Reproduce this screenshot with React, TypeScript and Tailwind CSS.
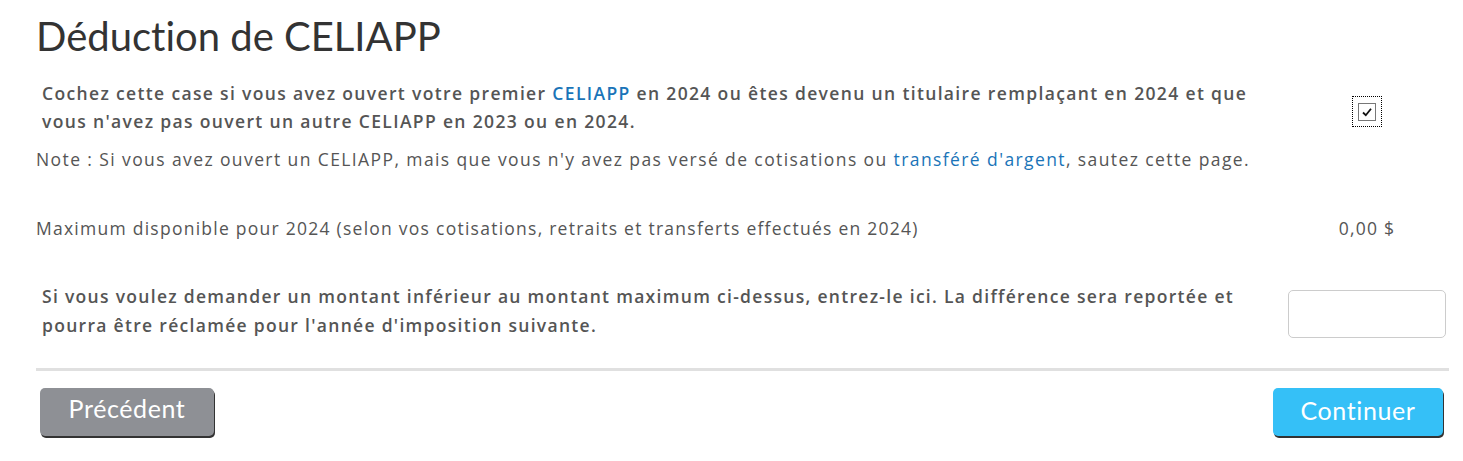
import React from 'react';

const body = { fontFamily: '"Open Sans", "Liberation Sans", sans-serif' };
const title = { fontFamily: 'Lato, "Open Sans", sans-serif' };

const App: React.FC = () => {
  return (
    <div className="w-[1463px] h-[461px] bg-white text-[#555] pl-[36px] pr-[14px]" style={body}>
      <h1 className="pt-[14px] text-[40px] leading-[44px] text-[#333] font-normal [font-variant-ligatures:none]" style={title}>
        Déduction de CELIAPP
      </h1>

      <div className="mt-[21px] grid grid-cols-[1fr_158px] gap-x-[3px] pr-[3px]">
        <p className="pl-[6px] text-[17.5px] leading-[28px] font-semibold tracking-[1.35px]">
          Cochez cette case si vous avez ouvert votre premier{' '}
          <a className="text-[#1a74b8]">CELIAPP</a> en 2024 ou êtes devenu un titulaire remplaçant en 2024 et que
          vous n'avez pas ouvert un autre CELIAPP en 2023 ou en 2024.
        </p>
        <div className="flex justify-center pt-[17px]">
          <div className="w-[30px] h-[31px] border border-dotted border-black flex items-center justify-center">
            <div className="w-[18px] h-[18px] border border-[#777] bg-white flex items-center justify-center">
              <svg width="12" height="12" viewBox="0 0 12 12">
                <path d="M2 6.5 L4.8 9.2 L10 2.8" fill="none" stroke="#111" strokeWidth="1.8" />
              </svg>
            </div>
          </div>
        </div>
      </div>

      <p className="mt-[12px] text-[17.5px] leading-[24px] tracking-[1.4px]">
        Note : Si vous avez ouvert un CELIAPP, mais que vous n'y avez pas versé de cotisations ou{' '}
        <a className="text-[#1a74b8]">transféré d'argent</a>, sautez cette page.
      </p>

      <div className="mt-[45px] grid grid-cols-[1fr_158px] gap-x-[3px] pr-[3px] text-[17.5px] leading-[24px] tracking-[1.25px]">
        <p>Maximum disponible pour 2024 (selon vos cotisations, retraits et transferts effectués en 2024)</p>
        <p className="text-center">0,00 $</p>
      </div>

      <div className="mt-[42px] grid grid-cols-[1fr_158px] gap-x-[3px] pr-[3px] items-start">
        <p className="pl-[6px] pr-[20px] text-[17.5px] leading-[29px] font-semibold tracking-[1.3px]">
          Si vous voulez demander un montant inférieur au montant maximum ci-dessus, entrez-le ici. La différence sera reportée et
          pourra être réclamée pour l'année d'imposition suivante.
        </p>
        <input
          type="text"
          className="mt-[8px] h-[48px] w-[158px] rounded-[5px] border border-[#ccc] bg-white px-2 outline-none"
        />
      </div>

      <div className="mt-[28px] h-[3px] bg-[#e0e0e0]" />

      <div className="mt-[17px] flex justify-between pl-[4px] pr-[6px]" style={title}>
        <button className="w-[174px] h-[48px] rounded-[5px] bg-[#8e9095] text-white text-[25px] tracking-[0.6px] pb-[6px] shadow-[1px_2px_0_#333]">
          Précédent
        </button>
        <button className="w-[170px] h-[48px] rounded-[5px] bg-[#35c0f7] text-white text-[25px] tracking-[0.6px] pb-[2px] shadow-[1px_2px_0_#333]">
          Continuer
        </button>
      </div>
    </div>
  );
};

export default App;
